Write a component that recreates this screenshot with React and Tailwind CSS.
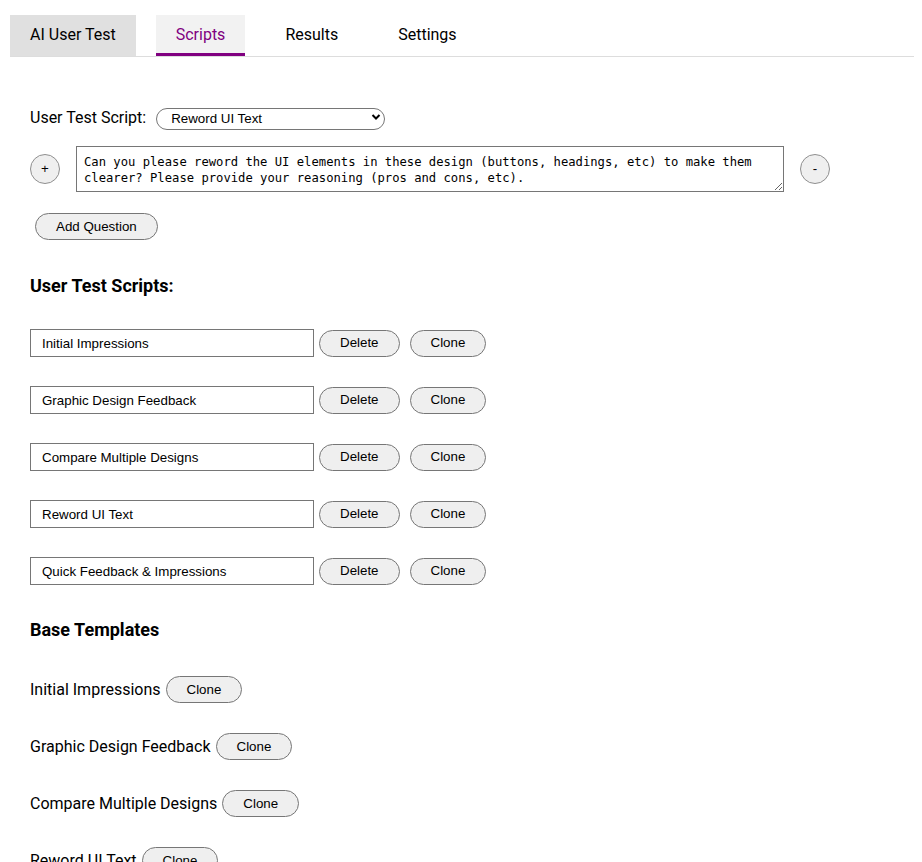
import { useState } from 'react';

const scripts = [
  'Initial Impressions',
  'Graphic Design Feedback',
  'Compare Multiple Designs',
  'Reword UI Text',
  'Quick Feedback & Impressions',
];

const templates = [
  'Initial Impressions',
  'Graphic Design Feedback',
  'Compare Multiple Designs',
  'Reword UI Text',
  'Quick Feedback & Impressions',
];

const tabs = ['AI User Test', 'Scripts', 'Results', 'Settings'];

const btn =
  "h-[27px] px-5 rounded-full border border-[#767676] bg-[#efefef] text-[13.33px] text-black font-['Liberation_Sans',Arial,sans-serif]";

function App() {
  const [active] = useState('Scripts');
  const [question, setQuestion] = useState(
    'Can you please reword the UI elements in these design (buttons, headings, etc) to make them clearer? Please provide your reasoning (pros and cons, etc).'
  );

  return (
    <div className="min-h-[862px] bg-white font-['Roboto',sans-serif] text-black">
      {/* Tabs */}
      <div className="ml-[10px] mt-[15px] flex w-[904px] border-b border-[#ddd]">
        {tabs.map((tab, i) => (
          <div
            key={tab}
            className={`mr-5 flex h-[41px] items-center px-5 text-base ${
              i === 0
                ? 'bg-[#e0e0e0] pb-[2px]'
                : tab === active
                ? 'border-b-[3px] border-[#800080] bg-[#f2f2f2] pt-[2px] text-[#800080]'
                : 'pb-[2px]'
            }`}
          >
            {tab}
          </div>
        ))}
      </div>

      <div className="px-[30px]">
        {/* Script picker */}
        <div className="mt-[50px] flex h-[22px] items-center">
          <span className="mr-[10px] text-base">User Test Script:</span>
          <div className="relative">
            <select
              defaultValue="Reword UI Text"
              className="h-[22px] w-[229px] appearance-none rounded-full border border-[#767676] bg-white pl-[14px] font-['Liberation_Sans',Arial,sans-serif] text-[13.33px] text-black"
            >
              {scripts.map((s) => (
                <option key={s}>{s}</option>
              ))}
            </select>
            <svg
              className="pointer-events-none absolute right-[4px] top-[6px]"
              width="10"
              height="10"
              viewBox="0 0 10 10"
            >
              <path d="M1.5 3 L5 6.5 L8.5 3" fill="none" stroke="#000" strokeWidth="2" />
            </svg>
          </div>
        </div>

        {/* Question row */}
        <div className="mt-[17px] flex items-center">
          <button className="h-[30px] w-[30px] rounded-full border border-[#8f8f8f] bg-[#efefef] font-['Liberation_Sans',Arial,sans-serif] text-[13.33px]">
            +
          </button>
          <textarea
            value={question}
            onChange={(e) => setQuestion(e.target.value)}
            className="ml-4 h-[46px] w-[708px] border border-[#767676] px-[7px] pt-[7px] font-['DejaVu_Sans_Mono',monospace] text-[12.2px] leading-4"
          />
          <button className="ml-4 h-[30px] w-[30px] rounded-full border border-[#8f8f8f] bg-[#efefef] font-['Liberation_Sans',Arial,sans-serif] text-[13.33px]">
            -
          </button>
        </div>

        <button className={`${btn} ml-[5px] mt-[21px] block`}>Add Question</button>

        {/* User scripts */}
        <h2 className="mt-[35px] text-lg font-bold leading-[21px]">User Test Scripts:</h2>
        <div className="mt-[33px] flex flex-col gap-[29px]">
          {scripts.map((s) => (
            <div key={s} className="flex items-center">
              <input
                defaultValue={s}
                className="h-[28px] w-[284px] border border-[#767676] pl-[11px] font-['Liberation_Sans',Arial,sans-serif] text-[13.33px]"
              />
              <button className={`${btn} ml-[5px]`}>Delete</button>
              <button className={`${btn} ml-[10px]`}>Clone</button>
            </div>
          ))}
        </div>

        {/* Base templates */}
        <h2 className="mt-[34px] text-lg font-bold leading-[21px]">Base Templates</h2>
        <div className="mt-[36px] flex flex-col gap-[30px] pb-10">
          {templates.map((t) => (
            <div key={t} className="flex items-center">
              <span className="text-base">{t}</span>
              <button className={`${btn} ml-[5px]`}>Clone</button>
            </div>
          ))}
        </div>
      </div>
    </div>
  );
}

export default App;
